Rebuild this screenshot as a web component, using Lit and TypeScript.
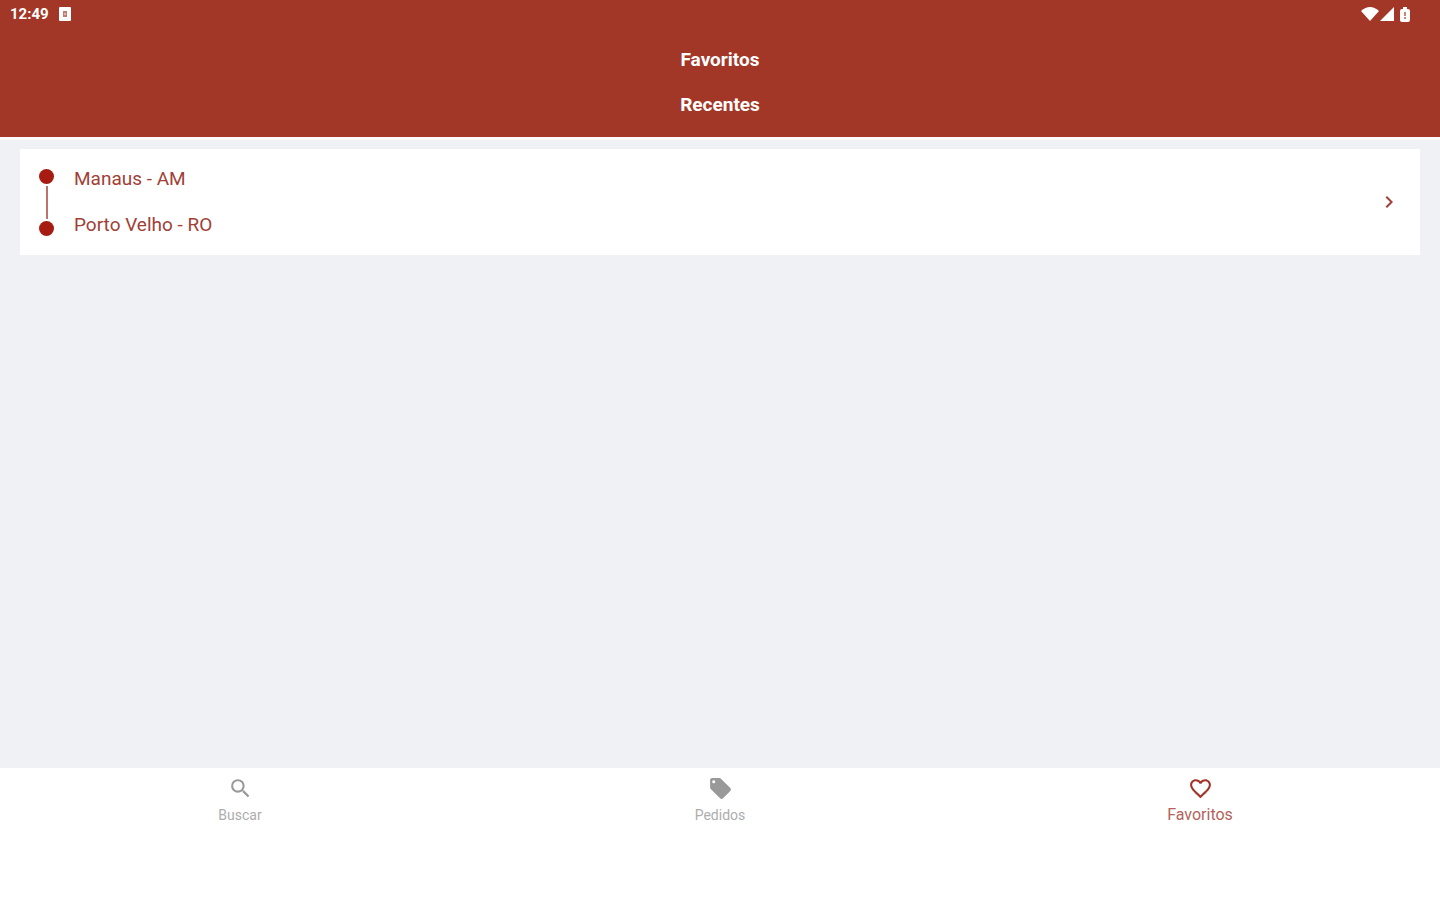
import { LitElement, html, css, svg } from "lit";
import { customElement, state } from "lit/decorators.js";

const icons = {
  search: svg`<path d="M15.5 14h-.79l-.28-.27A6.47 6.47 0 0 0 16 9.5 6.5 6.5 0 1 0 9.5 16c1.61 0 3.09-.59 4.23-1.57l.27.28v.79l5 4.99L20.49 19l-4.99-5zm-6 0C7.01 14 5 11.99 5 9.5S7.01 5 9.5 5 14 7.01 14 9.5 11.99 14 9.5 14z"/>`,
  tag: svg`<path d="M21.41 11.58l-9-9C12.05 2.22 11.55 2 11 2H4c-1.1 0-2 .9-2 2v7c0 .55.22 1.05.59 1.42l9 9c.36.36.86.58 1.41.58s1.05-.22 1.41-.59l7-7c.37-.36.59-.86.59-1.41s-.23-1.06-.59-1.42zM5.5 7C4.67 7 4 6.33 4 5.5S4.67 4 5.5 4 7 4.67 7 5.5 6.33 7 5.5 7z"/>`,
  heart: svg`<path d="M16.5 3c-1.74 0-3.41.81-4.5 2.09C10.91 3.81 9.24 3 7.5 3 4.42 3 2 5.42 2 8.5c0 3.78 3.4 6.86 8.55 11.54L12 21.35l1.45-1.32C18.6 15.36 22 12.28 22 8.5 22 5.42 19.58 3 16.5 3zm-4.4 15.55l-.1.1-.1-.1C7.14 14.24 4 11.39 4 8.5 4 6.5 5.5 5 7.5 5c1.54 0 3.04.99 3.57 2.36h1.87C13.46 5.99 14.96 5 16.5 5c2 0 3.5 1.5 3.5 3.5 0 2.89-3.14 5.74-7.9 10.05z"/>`,
};

const tabs = [
  { id: "buscar", label: "Buscar", icon: icons.search },
  { id: "pedidos", label: "Pedidos", icon: icons.tag },
  { id: "favoritos", label: "Favoritos", icon: icons.heart },
];

@customElement("app-root")
export class AppRoot extends LitElement {
  static styles = css`
    :host {
      display: flex;
      flex-direction: column;
      min-height: 100vh;
      background: #eff1f5;
      font-family: Roboto, "Liberation Sans", sans-serif;
      color: #a13f36;
    }
    * { box-sizing: border-box; }
    svg { display: block; fill: currentColor; }
    button { font: inherit; color: inherit; border: 0; margin: 0; cursor: pointer; }
    .header {
      background: #a33727;
      color: #fff;
      border-bottom: 3px solid #fafafb;
    }
    .status {
      display: flex;
      align-items: center;
      justify-content: space-between;
      height: 28px;
      padding: 0 26px 0 10px;
      font-size: 15px;
      font-weight: 700;
    }
    .group { display: flex; align-items: center; gap: 10px; }
    .signals { gap: 1px; }
    .titles { padding: 9px 0 10px; }
    .title {
      margin: 0;
      text-align: center;
      font-size: 19px;
      line-height: 45px;
      font-weight: 700;
    }
    .content { flex: 1; padding: 9px 20px; }
    .card {
      display: flex;
      align-items: center;
      width: 100%;
      padding: 18px 19px;
      background: #fff;
      text-align: left;
    }
    .route {
      display: flex;
      flex-direction: column;
      align-items: center;
      gap: 2px;
      width: 15px;
      margin-right: 20px;
    }
    .dot { width: 15px; height: 15px; border-radius: 50%; background: #a61c12; }
    .line { width: 2px; height: 33px; background: #bb736d; }
    .cities {
      flex: 1;
      display: flex;
      flex-direction: column;
      gap: 22px;
      font-size: 19px;
      line-height: 24px;
    }
    .nav {
      display: flex;
      align-items: flex-start;
      height: 132px;
      background: #fff;
    }
    .tab {
      flex: 1;
      display: flex;
      flex-direction: column;
      align-items: center;
      gap: 4px;
      padding: 8px 0;
      background: none;
      color: #999;
      font-size: 14px;
      line-height: 20px;
    }
    .label { color: #adadad; }
    .tab[aria-current="page"] { color: #a13328; font-size: 16px; }
    .tab[aria-current="page"] .label { color: #b3635b; }
  `;

  @state() private active = "favoritos";

  render() {
    return html`
      <header class="header">
        <div class="status">
          <div class="group">
            <span>12:49</span>
            <svg width="12" height="14" viewBox="0 0 12 14" aria-hidden="true">
              <path fill-rule="evenodd" d="M1 0h10q1 0 1 1v12q0 1-1 1H1q-1 0-1-1V1q0-1 1-1zM4 4v6h4V4z"/>
              <path d="M4 4h4v6H4z" opacity=".35"/>
              <path d="M5 6h2v2H5z" opacity=".45"/>
            </svg>
          </div>
          <div class="group signals">
            <svg width="18" height="14" viewBox="0 0 18 14" aria-hidden="true">
              <path d="M0 4Q9-4 18 4L9 14z"/>
            </svg>
            <svg width="14" height="14" viewBox="0 0 14 14" aria-hidden="true">
              <path d="M14 0v14H0z"/>
            </svg>
            <svg width="19" height="15" viewBox="0 0 19 15" aria-hidden="true">
              <path d="M8 0h4v2h1q2 0 2 2v9q0 2-2 2H7q-2 0-2-2V4q0-2 2-2h1z"/>
              <path d="M9 5h2v4H9zM9 10h2v2H9z" fill="#a33727" opacity=".6"/>
            </svg>
          </div>
        </div>
        <div class="titles">
          <h1 class="title">Favoritos</h1>
          <h2 class="title">Recentes</h2>
        </div>
      </header>
      <main class="content">
        <button class="card" type="button">
          <span class="route" aria-hidden="true">
            <span class="dot"></span><span class="line"></span><span class="dot"></span>
          </span>
          <span class="cities"><span>Manaus - AM</span><span>Porto Velho - RO</span></span>
          <svg width="24" height="24" viewBox="0 0 24 24" aria-hidden="true">
            <path d="M10 6 8.59 7.41 13.17 12l-4.58 4.59L10 18l6-6z"/>
          </svg>
        </button>
      </main>
      <nav class="nav">
        ${tabs.map(
          (t) => html`
            <button
              class="tab"
              type="button"
              aria-current=${this.active === t.id ? "page" : "false"}
              @click=${() => (this.active = t.id)}
            >
              <svg width="25" height="25" viewBox="0 0 24 24" aria-hidden="true">${t.icon}</svg>
              <span class="label">${t.label}</span>
            </button>
          `
        )}
      </nav>
    `;
  }
}
